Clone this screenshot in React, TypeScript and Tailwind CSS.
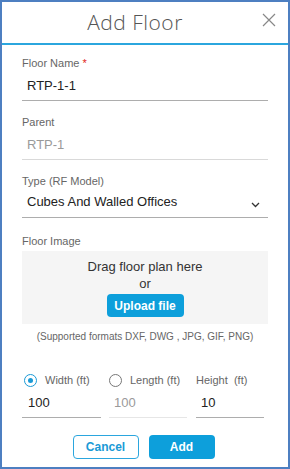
import React from "react";

// Small underlined text field used throughout the form
const Field: React.FC<{ label: React.ReactNode; value: string; muted?: boolean; className?: string }> = ({
  label,
  value,
  muted,
  className = "",
}) => (
  <div className={className}>
    <div className="h-[14px] text-[11px] leading-[14px] text-[#666]">{label}</div>
    <div className={`mt-[7px] h-[18px] pl-[5px] text-[13px] leading-[18px] ${muted ? "text-[#9a9a9a]" : "text-[#222]"}`}>
      {value}
    </div>
    <div className={`mt-[5px] h-px ${muted ? "bg-[#d9d9d9]" : "bg-[#adadad]"}`} />
  </div>
);

const Radio: React.FC<{ checked?: boolean; label: string }> = ({ checked, label }) => (
  <div className="flex h-[14px] items-center gap-[8px] text-[11px] leading-[14px] text-[#666]">
    <span
      className={`flex h-[13px] w-[13px] items-center justify-center rounded-full border ${
        checked ? "border-[#1a9ad6]" : "border-[#777]"
      }`}
    >
      {checked && <span className="h-[5px] w-[5px] rounded-full bg-[#1a9ad6]" />}
    </span>
    {label}
  </div>
);

export default function App() {
  return (
    <div
      className="flex h-[469px] w-[290px] flex-col border-2 border-[#4d7fc1] bg-white"
      style={{ fontFamily: '"Liberation Sans", Arial, sans-serif' }}
    >
      {/* Header */}
      <div className="relative flex h-[41px] shrink-0 items-center justify-center pr-[20px]">
        <h1 className="text-[21px] font-light tracking-[0.5px] text-[#555]" style={{ fontFamily: '"Open Sans", sans-serif' }}>
          Add Floor
        </h1>
        <button type="button" className="absolute right-[12px] top-[11px] text-[#888]">
          <svg width="14" height="14" viewBox="0 0 14 14" fill="none" stroke="currentColor" strokeWidth="1.2">
            <path d="M1 1L13 13M13 1L1 13" />
          </svg>
        </button>
      </div>
      <div className="h-[2px] shrink-0 bg-[#2ba6de]" />

      {/* Body */}
      <div className="flex flex-col px-[20px] pt-[11px]">
        <Field
          label={
            <>
              Floor Name <span className="text-[#e2231a]">*</span>
            </>
          }
          value="RTP-1-1"
        />
        <Field className="mt-[14px]" label="Parent" value="RTP-1" muted />

        {/* Type select */}
        <div className="mt-[14px]">
          <div className="h-[14px] text-[11px] leading-[14px] text-[#666]">Type (RF Model)</div>
          <div className="mt-[5px] flex h-[18px] items-center justify-between pl-[5px] pr-[8px] text-[13px] leading-[18px] text-[#222]">
            <span>Cubes And Walled Offices</span>
            <svg width="9" height="6" viewBox="0 0 9 6" fill="none" stroke="#333" strokeWidth="1.3" className="mt-[5px]">
              <path d="M1 1l3.5 3.5L8 1" />
            </svg>
          </div>
          <div className="mt-[6px] h-px bg-[#adadad]" />
        </div>

        {/* Floor image */}
        <div className="mt-[16px] h-[14px] text-[11px] leading-[14px] text-[#666]">Floor Image</div>
        <div className="mt-[3px] flex h-[73px] flex-col items-center bg-[#f5f5f5] pt-[7px]">
          <div className="text-[13px] leading-[18px] text-[#333]">Drag floor plan here</div>
          <div className="text-[13px] leading-[16px] text-[#333]">or</div>
          <button
            type="button"
            className="mt-[2px] h-[23px] w-[77px] rounded-[4px] bg-[#0d9fdb] text-[12px] font-bold text-white"
          >
            Upload file
          </button>
        </div>
        <div className="mt-[6px] text-center text-[10px] leading-[14px] text-[#666]">
          (Supported formats DXF, DWG , JPG, GIF, PNG)
        </div>

        {/* Dimensions */}
        <div className="mt-[29px] flex">
          <div className="w-[79px]">
            <div className="pl-[2px]">
              <Radio checked label="Width (ft)" />
            </div>
            <div className="mt-[7px] h-[18px] pl-[6px] text-[13px] leading-[18px] text-[#222]">100</div>
            <div className="mt-[5px] h-px bg-[#adadad]" />
          </div>
          <div className="ml-[8px] w-[78px]">
            <Radio label="Length (ft)" />
            <div className="mt-[7px] h-[18px] pl-[5px] text-[13px] leading-[18px] text-[#9a9a9a]">100</div>
            <div className="mt-[5px] h-px bg-[#e6e6e6]" />
          </div>
          <div className="ml-[9px] w-[68px]">
            <div className="h-[14px] text-[11px] leading-[14px] text-[#666]">Height&nbsp; (ft)</div>
            <div className="mt-[7px] h-[18px] pl-[5px] text-[13px] leading-[18px] text-[#222]">10</div>
            <div className="mt-[5px] h-px bg-[#adadad]" />
          </div>
        </div>

        {/* Actions */}
        <div className="mt-[17px] flex justify-center gap-[10px] pr-[3px]">
          <button
            type="button"
            className="h-[24px] w-[66px] rounded-[4px] border border-[#2ba6de] text-[12px] font-bold text-[#1a9ad6]"
          >
            Cancel
          </button>
          <button type="button" className="h-[24px] w-[66px] rounded-[4px] bg-[#0d9fdb] text-[12px] font-bold text-white">
            Add
          </button>
        </div>
      </div>
    </div>
  );
}
